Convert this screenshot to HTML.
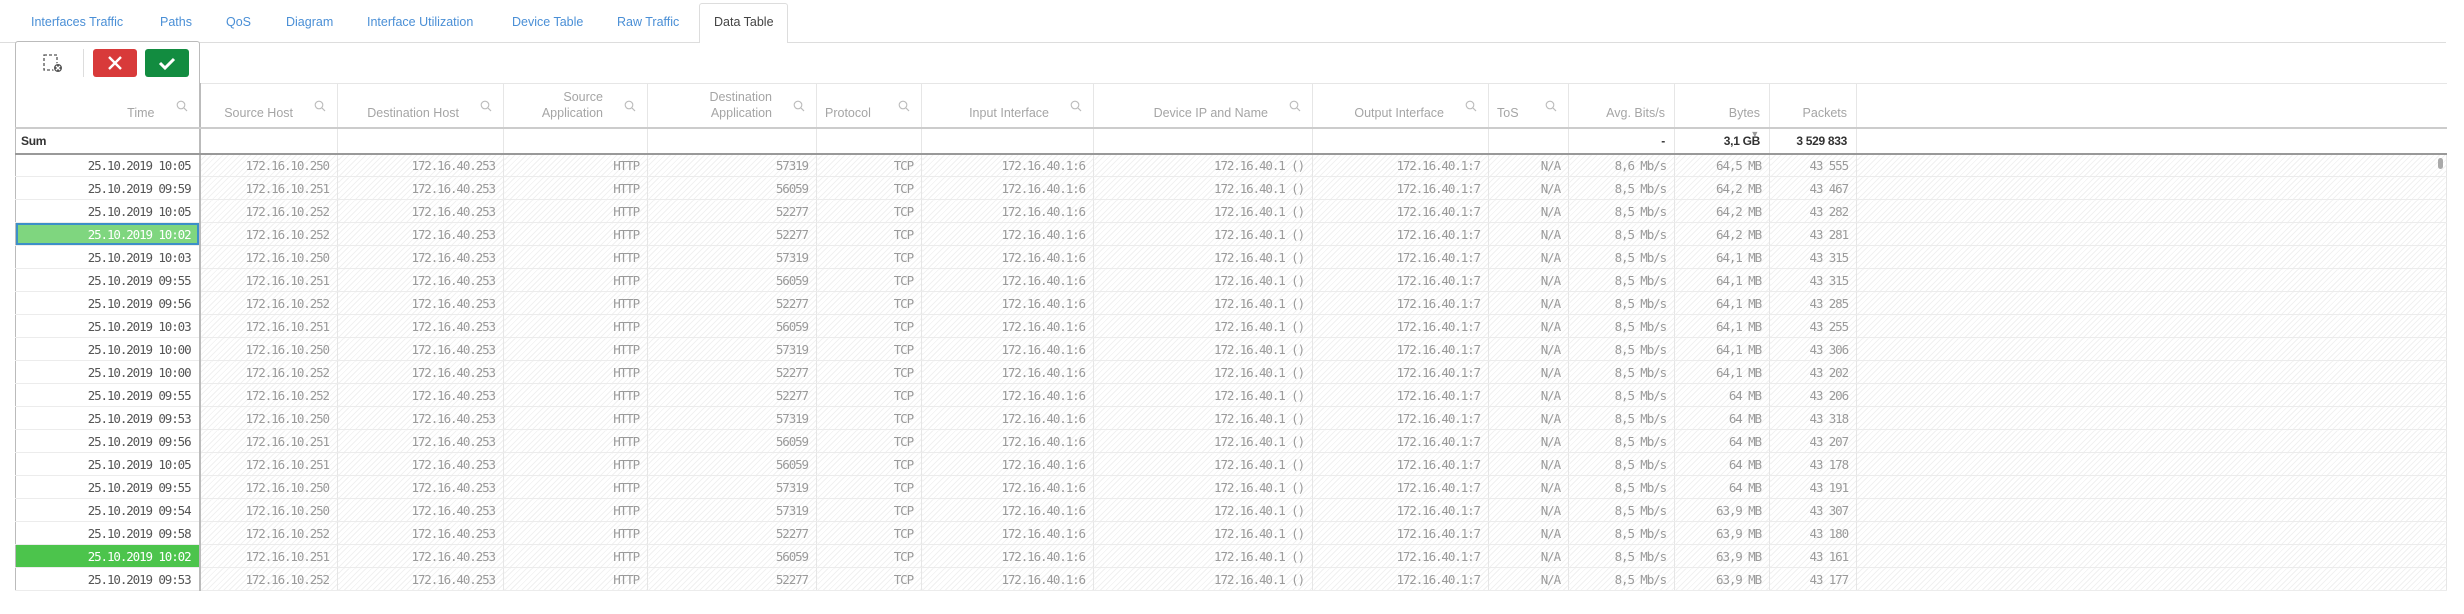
<!DOCTYPE html>
<html><head><meta charset="utf-8">
<style>
*{margin:0;padding:0;box-sizing:border-box}
body{width:2464px;height:614px;background:#fff;position:relative;overflow:hidden;font-family:"Liberation Sans",sans-serif}
.tabline{position:absolute;left:0;top:42px;width:2446px;height:1px;background:#ddd}
.tab{position:absolute;top:15px;font-size:12.5px;color:#4a8fd6;white-space:nowrap}
.atab{position:absolute;left:699px;top:3px;width:89px;height:40px;background:#fff;border:1px solid #ddd;border-bottom:none;border-radius:3px 3px 0 0}
.tb{position:absolute;left:15px;top:41px;width:185px;height:43px;border:1px solid #bbb;border-bottom:none;border-radius:3px 3px 0 0;background:#fff}
.btn{position:absolute;top:7px;width:44px;height:28px;border-radius:3px}
table{position:absolute;left:15px;top:83px;border-collapse:collapse;table-layout:fixed;width:2431px}
td,th{overflow:hidden;white-space:nowrap;text-align:right}
th{height:44px;font-weight:normal;font-size:12.5px;color:#a5a5a5;border-right:1px solid #e6e6e6;border-top:1px solid #e6e6e6;border-bottom:2px solid #ccc;vertical-align:bottom;padding:0 44px 6px 0;position:relative;line-height:16px}
th.ni{padding-right:9px}
th svg{position:absolute;right:11px;top:16px}
tr.sum td{height:26px;border-bottom:2px solid #999;border-right:1px solid #e6e6e6;font-weight:bold;font-size:12px;color:#333;padding-right:9px;letter-spacing:-0.3px}
tr.r td{height:23px;border-bottom:1px solid #ececec;border-right:1px solid #e6e6e6;font-family:"DejaVu Sans Mono",monospace;font-size:12.5px;letter-spacing:-1.1px;color:#9a9a9a;padding-right:8px;background:repeating-linear-gradient(135deg,#fff 0,#fff 3px,#f1f1f1 3px,#f1f1f1 4px)}
tr.r td.t{background:#fff;color:#555;border-left:1px solid #bbb;border-right:2px solid #bbb}
tr.r td.s1{background:#7fd67f;color:#fff;box-shadow:inset 0 0 0 2px #3c8fc8}
tr.r td.s2{background:#4cc44c;color:#fff}
.c0{border-left:1px solid #bbb;border-right:2px solid #bbb!important}
</style></head><body>
<div class="tabline"></div>
<div class="atab"></div>
<div class="tab" style="left:31px">Interfaces Traffic</div>
<div class="tab" style="left:160px">Paths</div>
<div class="tab" style="left:226px">QoS</div>
<div class="tab" style="left:286px">Diagram</div>
<div class="tab" style="left:367px">Interface Utilization</div>
<div class="tab" style="left:512px">Device Table</div>
<div class="tab" style="left:617px">Raw Traffic</div>
<div class="tab" style="left:714px;color:#444">Data Table</div>
<div class="tb">
<svg style="position:absolute;left:27px;top:12px" width="22" height="20" viewBox="0 0 22 20"><rect x="1" y="1" width="13" height="15" fill="none" stroke="#555" stroke-width="1.3" stroke-dasharray="3 2"/><circle cx="15" cy="14" r="4.5" fill="#555" stroke="#fff" stroke-width="1"/><path d="M13 12l4 4M17 12l-4 4" stroke="#fff" stroke-width="1.3"/></svg>
<div style="position:absolute;left:67px;top:7px;width:1px;height:28px;background:#ddd"></div>
<div class="btn" style="left:77px;background:#d83a3a"><svg width="44" height="28"><path d="M16 8l12 12M28 8l-12 12" stroke="#fff" stroke-width="2.4"/></svg></div>
<div class="btn" style="left:129px;background:#128c40"><svg width="44" height="28"><path d="M15 14l5 5 9-9" stroke="#fff" stroke-width="3" fill="none"/></svg></div>
</div>
<table>
<colgroup><col style="width:184px"><col style="width:138px"><col style="width:166px"><col style="width:144px"><col style="width:169px"><col style="width:105px"><col style="width:172px"><col style="width:219px"><col style="width:176px"><col style="width:80px"><col style="width:106px"><col style="width:95px"><col style="width:87px"><col style="width:590px"></colgroup>
<tr>
<th class="c0" style="border-top:none">Time<svg width="12" height="12"><circle cx="5" cy="5" r="3.8" fill="none" stroke="#bbb" stroke-width="1.1"/><path d="M8 8l3 3" stroke="#bbb" stroke-width="1.2"/></svg></th>
<th>Source Host<svg width="12" height="12"><circle cx="5" cy="5" r="3.8" fill="none" stroke="#bbb" stroke-width="1.1"/><path d="M8 8l3 3" stroke="#bbb" stroke-width="1.2"/></svg></th>
<th>Destination Host<svg width="12" height="12"><circle cx="5" cy="5" r="3.8" fill="none" stroke="#bbb" stroke-width="1.1"/><path d="M8 8l3 3" stroke="#bbb" stroke-width="1.2"/></svg></th>
<th>Source<br>Application<svg width="12" height="12"><circle cx="5" cy="5" r="3.8" fill="none" stroke="#bbb" stroke-width="1.1"/><path d="M8 8l3 3" stroke="#bbb" stroke-width="1.2"/></svg></th>
<th>Destination<br>Application<svg width="12" height="12"><circle cx="5" cy="5" r="3.8" fill="none" stroke="#bbb" stroke-width="1.1"/><path d="M8 8l3 3" stroke="#bbb" stroke-width="1.2"/></svg></th>
<th style="text-align:left;padding-left:8px">Protocol<svg width="12" height="12"><circle cx="5" cy="5" r="3.8" fill="none" stroke="#bbb" stroke-width="1.1"/><path d="M8 8l3 3" stroke="#bbb" stroke-width="1.2"/></svg></th>
<th>Input Interface<svg width="12" height="12"><circle cx="5" cy="5" r="3.8" fill="none" stroke="#bbb" stroke-width="1.1"/><path d="M8 8l3 3" stroke="#bbb" stroke-width="1.2"/></svg></th>
<th>Device IP and Name<svg width="12" height="12"><circle cx="5" cy="5" r="3.8" fill="none" stroke="#bbb" stroke-width="1.1"/><path d="M8 8l3 3" stroke="#bbb" stroke-width="1.2"/></svg></th>
<th>Output Interface<svg width="12" height="12"><circle cx="5" cy="5" r="3.8" fill="none" stroke="#bbb" stroke-width="1.1"/><path d="M8 8l3 3" stroke="#bbb" stroke-width="1.2"/></svg></th>
<th style="text-align:left;padding-left:8px">ToS<svg width="12" height="12"><circle cx="5" cy="5" r="3.8" fill="none" stroke="#bbb" stroke-width="1.1"/><path d="M8 8l3 3" stroke="#bbb" stroke-width="1.2"/></svg></th>
<th class="ni">Avg. Bits/s</th>
<th class="ni">Bytes</th>
<th class="ni">Packets</th>
<th class="ni" style="border-right:none"></th>
</tr>
<tr class="sum"><td class="c0" style="text-align:left;padding-left:5px">Sum</td><td></td><td></td><td></td><td></td><td></td><td></td><td></td><td></td><td></td><td>-</td><td style="position:relative"><span style="position:absolute;right:10px;top:0;color:#999;font-size:9px">▼</span>3,1 GB</td><td>3 529 833</td><td style="border-right:none"></td></tr>
<tr class="r"><td class="t">25.10.2019 10:05</td><td>172.16.10.250</td><td>172.16.40.253</td><td>HTTP</td><td>57319</td><td>TCP</td><td>172.16.40.1:6</td><td>172.16.40.1 ()</td><td>172.16.40.1:7</td><td>N/A</td><td>8,6 Mb/s</td><td>64,5 MB</td><td>43 555</td><td style="position:relative"><span style="position:absolute;right:3px;top:3px;width:5px;height:11px;border-radius:3px;background:#aaa"></span></td></tr>
<tr class="r"><td class="t">25.10.2019 09:59</td><td>172.16.10.251</td><td>172.16.40.253</td><td>HTTP</td><td>56059</td><td>TCP</td><td>172.16.40.1:6</td><td>172.16.40.1 ()</td><td>172.16.40.1:7</td><td>N/A</td><td>8,5 Mb/s</td><td>64,2 MB</td><td>43 467</td><td></td></tr>
<tr class="r"><td class="t">25.10.2019 10:05</td><td>172.16.10.252</td><td>172.16.40.253</td><td>HTTP</td><td>52277</td><td>TCP</td><td>172.16.40.1:6</td><td>172.16.40.1 ()</td><td>172.16.40.1:7</td><td>N/A</td><td>8,5 Mb/s</td><td>64,2 MB</td><td>43 282</td><td></td></tr>
<tr class="r"><td class="t s1">25.10.2019 10:02</td><td>172.16.10.252</td><td>172.16.40.253</td><td>HTTP</td><td>52277</td><td>TCP</td><td>172.16.40.1:6</td><td>172.16.40.1 ()</td><td>172.16.40.1:7</td><td>N/A</td><td>8,5 Mb/s</td><td>64,2 MB</td><td>43 281</td><td></td></tr>
<tr class="r"><td class="t">25.10.2019 10:03</td><td>172.16.10.250</td><td>172.16.40.253</td><td>HTTP</td><td>57319</td><td>TCP</td><td>172.16.40.1:6</td><td>172.16.40.1 ()</td><td>172.16.40.1:7</td><td>N/A</td><td>8,5 Mb/s</td><td>64,1 MB</td><td>43 315</td><td></td></tr>
<tr class="r"><td class="t">25.10.2019 09:55</td><td>172.16.10.251</td><td>172.16.40.253</td><td>HTTP</td><td>56059</td><td>TCP</td><td>172.16.40.1:6</td><td>172.16.40.1 ()</td><td>172.16.40.1:7</td><td>N/A</td><td>8,5 Mb/s</td><td>64,1 MB</td><td>43 315</td><td></td></tr>
<tr class="r"><td class="t">25.10.2019 09:56</td><td>172.16.10.252</td><td>172.16.40.253</td><td>HTTP</td><td>52277</td><td>TCP</td><td>172.16.40.1:6</td><td>172.16.40.1 ()</td><td>172.16.40.1:7</td><td>N/A</td><td>8,5 Mb/s</td><td>64,1 MB</td><td>43 285</td><td></td></tr>
<tr class="r"><td class="t">25.10.2019 10:03</td><td>172.16.10.251</td><td>172.16.40.253</td><td>HTTP</td><td>56059</td><td>TCP</td><td>172.16.40.1:6</td><td>172.16.40.1 ()</td><td>172.16.40.1:7</td><td>N/A</td><td>8,5 Mb/s</td><td>64,1 MB</td><td>43 255</td><td></td></tr>
<tr class="r"><td class="t">25.10.2019 10:00</td><td>172.16.10.250</td><td>172.16.40.253</td><td>HTTP</td><td>57319</td><td>TCP</td><td>172.16.40.1:6</td><td>172.16.40.1 ()</td><td>172.16.40.1:7</td><td>N/A</td><td>8,5 Mb/s</td><td>64,1 MB</td><td>43 306</td><td></td></tr>
<tr class="r"><td class="t">25.10.2019 10:00</td><td>172.16.10.252</td><td>172.16.40.253</td><td>HTTP</td><td>52277</td><td>TCP</td><td>172.16.40.1:6</td><td>172.16.40.1 ()</td><td>172.16.40.1:7</td><td>N/A</td><td>8,5 Mb/s</td><td>64,1 MB</td><td>43 202</td><td></td></tr>
<tr class="r"><td class="t">25.10.2019 09:55</td><td>172.16.10.252</td><td>172.16.40.253</td><td>HTTP</td><td>52277</td><td>TCP</td><td>172.16.40.1:6</td><td>172.16.40.1 ()</td><td>172.16.40.1:7</td><td>N/A</td><td>8,5 Mb/s</td><td>64 MB</td><td>43 206</td><td></td></tr>
<tr class="r"><td class="t">25.10.2019 09:53</td><td>172.16.10.250</td><td>172.16.40.253</td><td>HTTP</td><td>57319</td><td>TCP</td><td>172.16.40.1:6</td><td>172.16.40.1 ()</td><td>172.16.40.1:7</td><td>N/A</td><td>8,5 Mb/s</td><td>64 MB</td><td>43 318</td><td></td></tr>
<tr class="r"><td class="t">25.10.2019 09:56</td><td>172.16.10.251</td><td>172.16.40.253</td><td>HTTP</td><td>56059</td><td>TCP</td><td>172.16.40.1:6</td><td>172.16.40.1 ()</td><td>172.16.40.1:7</td><td>N/A</td><td>8,5 Mb/s</td><td>64 MB</td><td>43 207</td><td></td></tr>
<tr class="r"><td class="t">25.10.2019 10:05</td><td>172.16.10.251</td><td>172.16.40.253</td><td>HTTP</td><td>56059</td><td>TCP</td><td>172.16.40.1:6</td><td>172.16.40.1 ()</td><td>172.16.40.1:7</td><td>N/A</td><td>8,5 Mb/s</td><td>64 MB</td><td>43 178</td><td></td></tr>
<tr class="r"><td class="t">25.10.2019 09:55</td><td>172.16.10.250</td><td>172.16.40.253</td><td>HTTP</td><td>57319</td><td>TCP</td><td>172.16.40.1:6</td><td>172.16.40.1 ()</td><td>172.16.40.1:7</td><td>N/A</td><td>8,5 Mb/s</td><td>64 MB</td><td>43 191</td><td></td></tr>
<tr class="r"><td class="t">25.10.2019 09:54</td><td>172.16.10.250</td><td>172.16.40.253</td><td>HTTP</td><td>57319</td><td>TCP</td><td>172.16.40.1:6</td><td>172.16.40.1 ()</td><td>172.16.40.1:7</td><td>N/A</td><td>8,5 Mb/s</td><td>63,9 MB</td><td>43 307</td><td></td></tr>
<tr class="r"><td class="t">25.10.2019 09:58</td><td>172.16.10.252</td><td>172.16.40.253</td><td>HTTP</td><td>52277</td><td>TCP</td><td>172.16.40.1:6</td><td>172.16.40.1 ()</td><td>172.16.40.1:7</td><td>N/A</td><td>8,5 Mb/s</td><td>63,9 MB</td><td>43 180</td><td></td></tr>
<tr class="r"><td class="t s2">25.10.2019 10:02</td><td>172.16.10.251</td><td>172.16.40.253</td><td>HTTP</td><td>56059</td><td>TCP</td><td>172.16.40.1:6</td><td>172.16.40.1 ()</td><td>172.16.40.1:7</td><td>N/A</td><td>8,5 Mb/s</td><td>63,9 MB</td><td>43 161</td><td></td></tr>
<tr class="r"><td class="t">25.10.2019 09:53</td><td>172.16.10.252</td><td>172.16.40.253</td><td>HTTP</td><td>52277</td><td>TCP</td><td>172.16.40.1:6</td><td>172.16.40.1 ()</td><td>172.16.40.1:7</td><td>N/A</td><td>8,5 Mb/s</td><td>63,9 MB</td><td>43 177</td><td></td></tr>
</table>
</body></html>
